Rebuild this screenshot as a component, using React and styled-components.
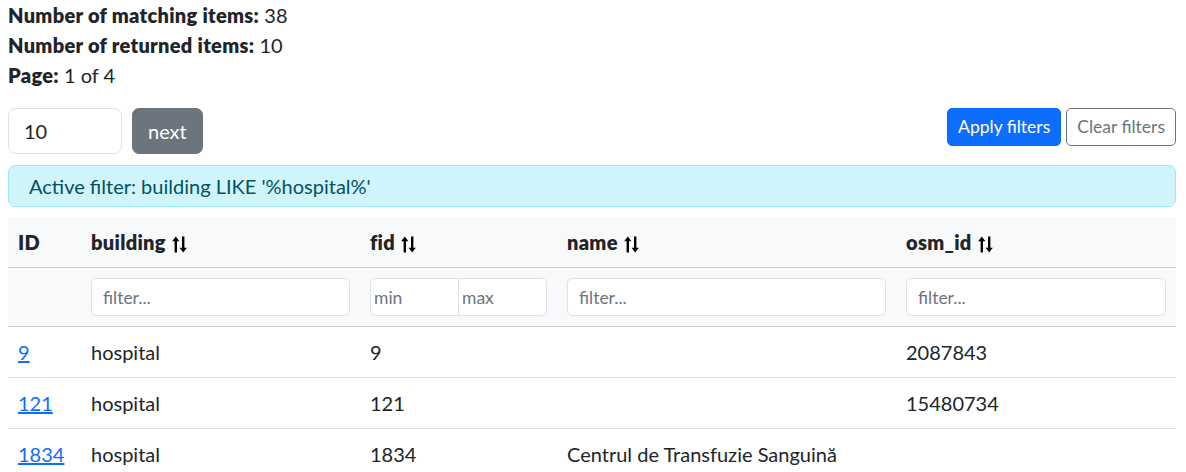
import React from "react";
import styled, { createGlobalStyle } from "styled-components";

const Global = createGlobalStyle`
  body {
    margin: 0 10px 8px 8px;
    font-family: Lato, "Open Sans", sans-serif;
    font-size: 20px;
    line-height: 30px;
    color: #212529;
    background: #fff;
  }
  * { box-sizing: border-box; }
`;

const Stats = styled.div`
  display: flex;
  flex-direction: column;
`;
const Stat = styled.div`
  line-height: 30px;
  b { font-weight: 800; letter-spacing: 0.3px; }
`;

const Toolbar = styled.div`
  display: flex;
  align-items: flex-start;
  justify-content: space-between;
  margin-top: 18px;
`;
const Group = styled.div`
  display: flex;
  gap: ${(p) => p.$gap || 10}px;
`;
const PageInput = styled.input`
  width: 114px;
  height: 46px;
  padding: 0 16px 0 15px;
  font: inherit;
  font-size: 20px;
  color: #212529;
  border: 1px solid #dee2e6;
  border-radius: 8px;
  outline: none;
`;
const Button = styled.button`
  font: inherit;
  font-size: ${(p) => (p.$lg ? 20 : 17.5)}px;
  height: ${(p) => (p.$lg ? 46 : 38)}px;
  padding: 0 ${(p) => (p.$lg ? 15 : 10)}px;
  border-radius: ${(p) => (p.$lg ? 7 : 5)}px;
  cursor: pointer;
  border: 1px solid
    ${(p) => (p.$variant === "primary" ? "#0d6efd" : "#6c757d")};
  background: ${(p) =>
    p.$variant === "primary" ? "#0d6efd" : p.$variant === "secondary" ? "#6c757d" : "#fff"};
  color: ${(p) => (p.$variant === "outline" ? "#6c757d" : "#fff")};
`;

const Alert = styled.div`
  margin-top: 11px;
  padding: 5px 20px;
  background: #cff4fc;
  border: 1px solid #9eeaf9;
  border-radius: 7px;
  color: #055160;
  line-height: 30px;
`;

const Table = styled.table`
  margin-top: 10px;
  width: 100%;
  border-collapse: collapse;
  table-layout: fixed;
`;
const Head = styled.thead`
  background: #f8f9fa;
`;
const Th = styled.th`
  text-align: left;
  font-weight: 800;
  letter-spacing: 0.3px;
  padding: 10px 10px;
  line-height: 30px;
  border-bottom: 1px solid #c9cbcd;
  white-space: nowrap;
`;
const FilterCell = styled.td`
  padding: 10px 10px;
  border-bottom: 1px solid #c9cbcd;
`;
const Td = styled.td`
  padding: 10px 10px;
  line-height: 30px;
  border-bottom: 1px solid #dee2e6;
`;
const FilterInput = styled.input`
  display: block;
  width: 100%;
  height: 38px;
  padding: 0 11px;
  font: inherit;
  font-size: 17.5px;
  color: #212529;
  border: 1px solid #dee2e6;
  border-radius: 5px;
  outline: none;
  &::placeholder { color: #6c757d; }
`;
const RangeGroup = styled.div`
  display: flex;
  width: 100%;
`;
const RangeInput = styled.input`
  flex: 1;
  min-width: 0;
  height: 38px;
  padding: 0 3px;
  font: inherit;
  font-size: 17.5px;
  border: 1px solid #dee2e6;
  outline: none;
  border-radius: ${(p) => (p.$first ? "5px 0 0 5px" : "0 5px 5px 0")};
  ${(p) => (p.$first ? "" : "margin-left: -1px;")}
  &::placeholder { color: #6c757d; }
`;
const IdLink = styled.a`
  color: #0d6efd;
  text-decoration: underline;
`;
const SortIcon = styled.svg`
  width: 15px;
  height: 17px;
  margin-left: 6px;
  vertical-align: -3px;
`;

const Sort = () => (
  <SortIcon viewBox="0 0 15 17" fill="#000" stroke="#000">
    <path d="M3.8 16.5V4" strokeWidth="2.4" fill="none" />
    <path d="M3.8 0.6L7.4 5.2H0.2Z" stroke="none" />
    <path d="M11.2 0.5V13" strokeWidth="2.4" fill="none" />
    <path d="M11.2 16.4L14.8 11.8H7.6Z" stroke="none" />
  </SortIcon>
);

const rows = [
  { id: 9, building: "hospital", fid: 9, name: "", osm: "2087843" },
  { id: 121, building: "hospital", fid: 121, name: "", osm: "15480734" },
  { id: 1834, building: "hospital", fid: 1834, name: "Centrul de Transfuzie Sanguină", osm: "" },
];

export default function App() {
  return (
    <>
      <Global />
      <Stats>
        <Stat><b>Number of matching items:</b> 38</Stat>
        <Stat><b>Number of returned items:</b> 10</Stat>
        <Stat><b>Page:</b> 1 of 4</Stat>
      </Stats>
      <Toolbar>
        <Group>
          <PageInput defaultValue="10" />
          <Button $lg $variant="secondary">next</Button>
        </Group>
        <Group $gap={5}>
          <Button $variant="primary">Apply filters</Button>
          <Button $variant="outline">Clear filters</Button>
        </Group>
      </Toolbar>
      <Alert>Active filter: building LIKE '%hospital%'</Alert>
      <Table>
        <colgroup>
          <col style={{ width: 73 }} />
          <col style={{ width: 279 }} />
          <col style={{ width: 197 }} />
          <col style={{ width: 339 }} />
          <col />
        </colgroup>
        <Head>
          <tr>
            <Th>ID</Th>
            <Th>building<Sort /></Th>
            <Th>fid<Sort /></Th>
            <Th>name<Sort /></Th>
            <Th>osm_id<Sort /></Th>
          </tr>
          <tr>
            <FilterCell />
            <FilterCell><FilterInput placeholder="filter..." /></FilterCell>
            <FilterCell>
              <RangeGroup>
                <RangeInput $first placeholder="min" />
                <RangeInput placeholder="max" />
              </RangeGroup>
            </FilterCell>
            <FilterCell><FilterInput placeholder="filter..." /></FilterCell>
            <FilterCell><FilterInput placeholder="filter..." /></FilterCell>
          </tr>
        </Head>
        <tbody>
          {rows.map((r) => (
            <tr key={r.id}>
              <Td><IdLink href="#">{r.id}</IdLink></Td>
              <Td>{r.building}</Td>
              <Td>{r.fid}</Td>
              <Td>{r.name}</Td>
              <Td>{r.osm}</Td>
            </tr>
          ))}
        </tbody>
      </Table>
    </>
  );
}
